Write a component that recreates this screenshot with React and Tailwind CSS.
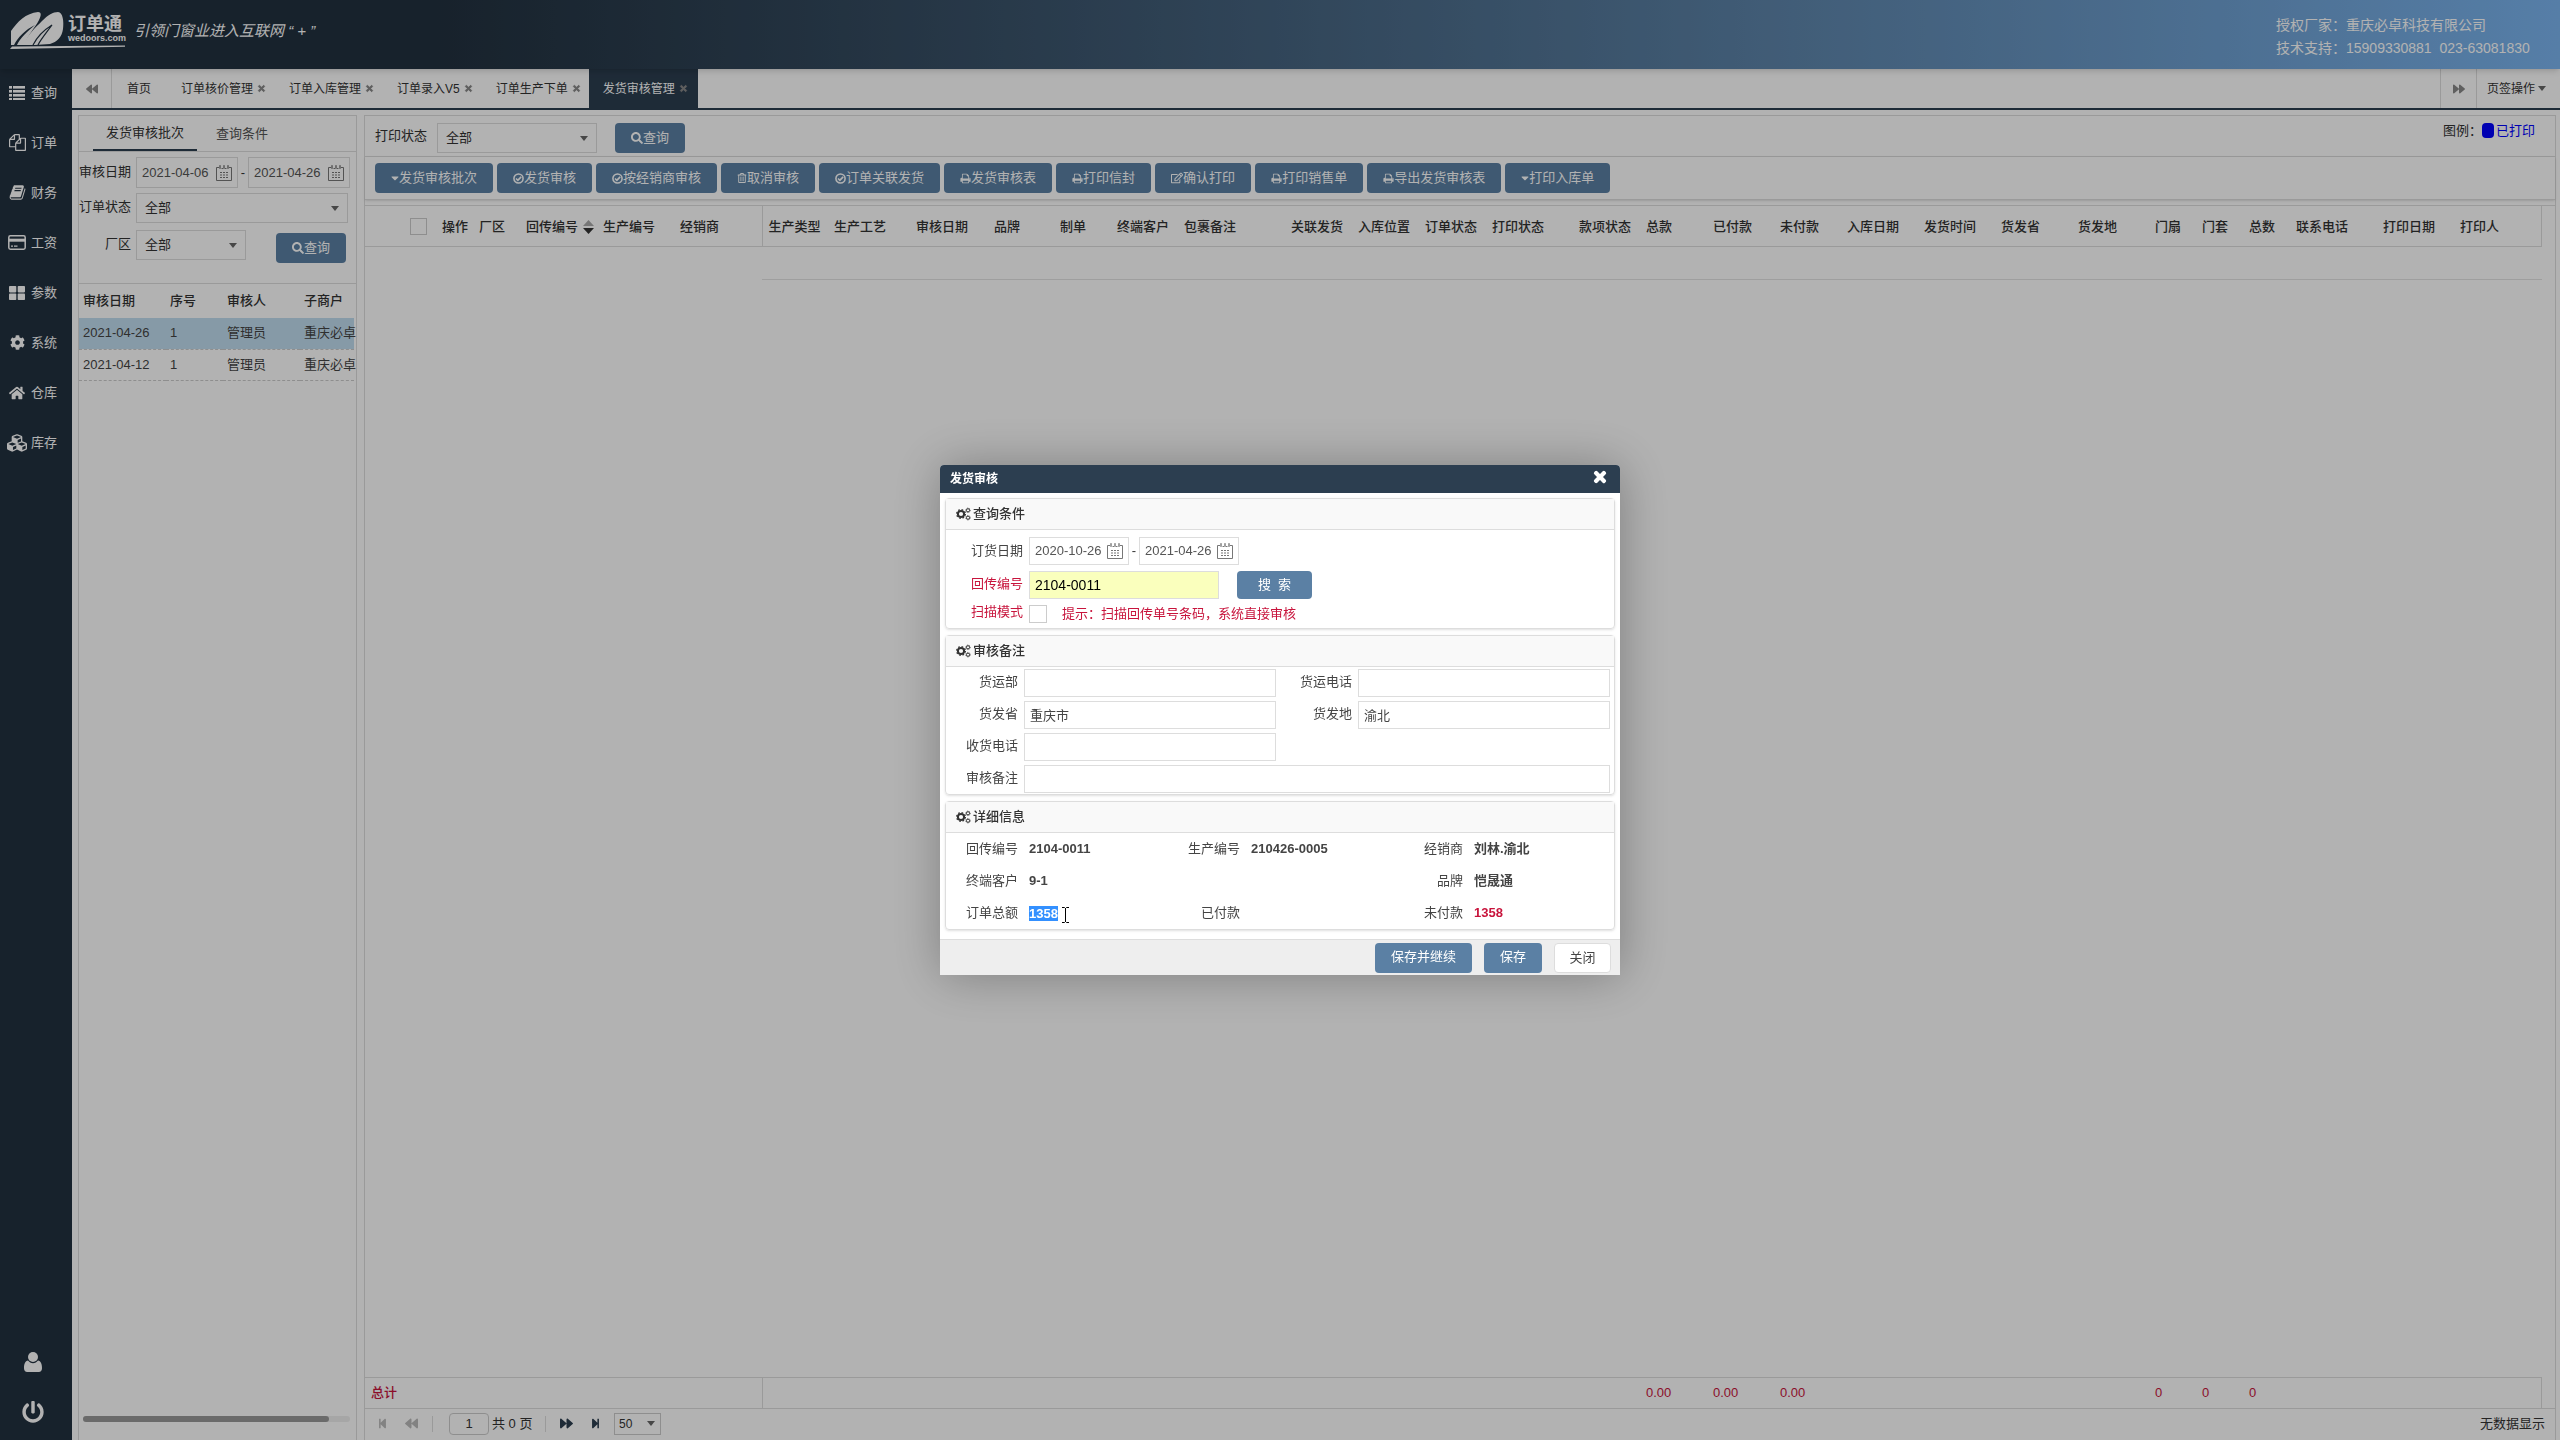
import { useState } from 'react'
import {
    FaBackward, FaForward, FaStepBackward, FaStepForward, FaTimes, FaCog, FaHome, FaCubes,
    FaPowerOff, FaSearch, FaRegTrashAlt, FaRegEdit, FaCaretDown,
} from 'react-icons/fa'

const ListIcon = () => (
    <svg viewBox="0 0 16 14" className="w-4 h-[14px]" fill="currentColor">
        {[0, 4, 8, 12].map(y => (
            <g key={y}>
                <rect x="0" y={y} width="3" height="2.6" />
                <rect x="4" y={y} width="12" height="2.6" />
            </g>
        ))}
    </svg>
)

const FilesIcon = () => (
    <svg viewBox="0 0 1792 1792" className="w-[17px] h-[17px]" fill="currentColor">
        <path d="M1696 384q40 0 68 28t28 68v1216q0 40-28 68t-68 28h-960q-40 0-68-28t-28-68v-288h-544q-40 0-68-28t-28-68v-672q0-40 20-88t48-76l408-408q28-28 76-48t88-20h416q40 0 68 28t28 68v328q68-40 128-40h416zm-544 213l-299 299h299v-299zm-640-384l-299 299h299v-299zm196 647l316-316v-416h-384v416q0 40-28 68t-68 28h-416v640h512v-256q0-40 20-88t48-76zm956 804v-1152h-384v416q0 40-28 68t-68 28h-416v640h896z" />
    </svg>
)

const BookIcon = () => (
    <svg viewBox="0 0 1792 1792" className="w-[17px] h-[17px]" fill="currentColor">
        <path d="M1703 478q40 57 18 129l-275 906q-19 64-76.5 107.5t-122.5 43.5h-923q-77 0-148.5-53.5t-99.5-131.5q-24-67-2-127 0-4 3-27t4-37q1-8-3-21.5t-3-19.5q2-11 8-21t16.5-23.5 16.5-23.5q23-38 45-91.5t30-91.5q3-10 .5-30t-.5-28q3-11 17-28t17-23q21-36 42-92t25-90q1-9-2.5-32t.5-28q4-13 22-30.5t22-22.5q19-26 42.5-84.5t27.5-96.5q1-8-3-25.5t-2-26.5q2-8 9-18t18-23 17-21q8-12 16.5-30.5t15-35 16-36 19.5-32 26.5-23.5 36-11.5 47.5 5.5l-1 3q38-9 51-9h761q74 0 114 56t18 130l-274 906q-36 119-71.5 153.5t-128.5 34.5h-869q-27 0-38 15-11 16-1 43 24 70 144 70h923q29 0 56-15.5t35-41.5l300-987q7-22 5-57 38 15 59 43zm-1064 2q-4 13 2 22.5t20 9.5h608q13 0 25.5-9.5t16.5-22.5l21-64q4-13-2-22.5t-20-9.5h-608q-13 0-25.5 9.5t-16.5 22.5zm-83 256q-4 13 2 22.5t20 9.5h608q13 0 25.5-9.5t16.5-22.5l21-64q4-13-2-22.5t-20-9.5h-608q-13 0-25.5 9.5t-16.5 22.5z" />
    </svg>
)

const CardIcon = () => (
    <svg viewBox="0 0 18 15" className="w-[18px] h-[15px]" fill="none" stroke="currentColor">
        <rect x="0.8" y="0.8" width="16.4" height="13.4" rx="1.6" strokeWidth="1.5" />
        <path d="M1 5.2h16" strokeWidth="3" />
        <path d="M3 11.2h2M6 11.2h3.5" strokeWidth="1.3" />
    </svg>
)

const BlocksIcon = () => (
    <svg viewBox="0 0 16 14" className="w-4 h-[14px]" fill="currentColor">
        <rect width="7.3" height="6.4" rx="0.8" />
        <rect x="8.7" width="7.3" height="6.4" rx="0.8" />
        <rect y="7.6" width="7.3" height="6.4" rx="0.8" />
        <rect x="8.7" y="7.6" width="7.3" height="6.4" rx="0.8" />
    </svg>
)

const UserIcon = () => (
    <svg viewBox="0 0 18 20" className="w-[18px] h-5" fill="currentColor">
        <ellipse cx="9" cy="5" rx="5" ry="5" />
        <path d="M4 8.6C1.2 9 0 12 0 16.2C0 18.5 1.3 20 3.2 20h11.6C16.7 20 18 18.5 18 16.2C18 12 16.8 9 14 8.6C12.8 10.3 11 11.2 9 11.2S5.2 10.3 4 8.6z" />
    </svg>
)

const PrintIcon = () => (
    <svg viewBox="0 0 1792 1792" className="w-[11px] h-[11px]" fill="currentColor">
        <path d="M448 1536h896v-256h-896v256zm0-640h896v-384h-160q-40 0-68-28t-28-68v-160h-640v640zm1152 64q0-26-19-45t-45-19-45 19-19 45 19 45 45 19 45-19 19-45zm128 0v416q0 13-9.5 22.5t-22.5 9.5h-224v160q0 40-28 68t-68 28h-960q-40 0-68-28t-28-68v-160h-224q-13 0-22.5-9.5t-9.5-22.5v-416q0-79 56.5-135.5t135.5-56.5h64v-544q0-40 28-68t68-28h672q40 0 88 20t76 48l152 152q28 28 48 76t20 88v256h64q79 0 135.5 56.5t56.5 135.5z" />
    </svg>
)

const CheckIcon = () => (
    <svg viewBox="0 0 12 12" className="w-[11px] h-[11px]" fill="none" stroke="currentColor">
        <circle cx="6" cy="6" r="5" strokeWidth="1.7" />
        <path d="M3.3 6l2 2l3.6-3.8" strokeWidth="1.8" />
    </svg>
)

const CogsIcon = () => (
    <svg viewBox="0 0 15 14" className="w-[15px] h-[14px]" fill="none" stroke="currentColor">
        <circle cx="5" cy="7" r="3.1" strokeWidth="2" />
        <circle cx="5" cy="7" r="4.4" strokeWidth="1.2" strokeDasharray="1.7 1.756" />
        <circle cx="12" cy="3.3" r="1.6" strokeWidth="1" />
        <circle cx="12" cy="3.3" r="2.3" strokeWidth="0.7" strokeDasharray="0.9 0.906" />
        <circle cx="12" cy="10.7" r="1.6" strokeWidth="1" />
        <circle cx="12" cy="10.7" r="2.3" strokeWidth="0.7" strokeDasharray="0.9 0.906" />
    </svg>
)

const CalendarIcon = () => (
    <svg viewBox="0 0 16 16" className="w-4 h-4 flex-shrink-0 text-[#777]" fill="none" stroke="currentColor">
        <path d="M3 2.5H0.5v13h15v-13H13M5.5 3.5h1.5M9 3.5h1.5" />
        <path d="M3.5 0.5h1v3h-1zM7.5 0.5h1v3h-1zM11.5 0.5h1v3h-1z" strokeWidth="0.7" />
        <path d="M4 7.5h2M7 7.5h2M10 7.5h2M4 10h2M7 10h2M10 10h2M4 12.5h2M7 12.5h2M10 12.5h2" strokeWidth="1.2" />
    </svg>
)

const Triangle = () => (
    <svg viewBox="0 0 8 5" className="w-2 h-[5px] flex-shrink-0 text-[#666] pointer-events-none" fill="currentColor">
        <path d="M0 0h8L4 5z" />
    </svg>
)

const NAV = [
    { icon: <ListIcon />, label: '查询' },
    { icon: <FilesIcon />, label: '订单' },
    { icon: <BookIcon />, label: '财务' },
    { icon: <CardIcon />, label: '工资' },
    { icon: <BlocksIcon />, label: '参数' },
    { icon: <FaCog size={15} />, label: '系统' },
    { icon: <FaHome size={16} />, label: '仓库' },
    { icon: <FaCubes size={20} />, label: '库存' },
]

const TABS = ['订单核价管理', '订单入库管理', '订单录入V5', '订单生产下单', '发货审核管理']

const caret = <FaCaretDown size={12} className="-mx-0.5" />

const TOOLS = [
    { icon: caret, label: '发货审核批次' },
    { icon: <CheckIcon />, label: '发货审核' },
    { icon: <CheckIcon />, label: '按经销商审核' },
    { icon: <FaRegTrashAlt size={10} />, label: '取消审核' },
    { icon: <CheckIcon />, label: '订单关联发货' },
    { icon: <PrintIcon />, label: '发货审核表' },
    { icon: <PrintIcon />, label: '打印信封' },
    { icon: <FaRegEdit size={12} />, label: '确认打印' },
    { icon: <PrintIcon />, label: '打印销售单' },
    { icon: <PrintIcon />, label: '导出发货审核表' },
    { icon: caret, label: '打印入库单' },
]

// the first FROZEN columns sit left of the divider
const FROZEN = 6
const COLUMNS = [
    { key: 'check', width: 71 },
    { key: 'op', label: '操作', width: 37 },
    { key: 'area', label: '厂区', width: 47 },
    { key: 'backNo', label: '回传编号', width: 77, sort: true },
    { key: 'prodNo', label: '生产编号', width: 77 },
    { key: 'dealer', label: '经销商', width: 88 },
    { key: 'type', label: '生产类型', width: 66 },
    { key: 'craft', label: '生产工艺', width: 82 },
    { key: 'date', label: '审核日期', width: 78 },
    { key: 'brand', label: '品牌', width: 66 },
    { key: 'maker', label: '制单', width: 57 },
    { key: 'client', label: '终端客户', width: 67 },
    { key: 'pack', label: '包裹备注', width: 107 },
    { key: 'link', label: '关联发货', width: 67 },
    { key: 'place', label: '入库位置', width: 67 },
    { key: 'status', label: '订单状态', width: 67 },
    { key: 'print', label: '打印状态', width: 87 },
    { key: 'pay', label: '款项状态', width: 67 },
    { key: 'total', label: '总款', width: 67, sum: '0.00' },
    { key: 'paid', label: '已付款', width: 67, sum: '0.00' },
    { key: 'unpaid', label: '未付款', width: 67, sum: '0.00' },
    { key: 'inDate', label: '入库日期', width: 77 },
    { key: 'outDate', label: '发货时间', width: 77 },
    { key: 'province', label: '货发省', width: 77 },
    { key: 'city', label: '货发地', width: 77 },
    { key: 'leaf', label: '门扇', width: 47, sum: '0' },
    { key: 'frame', label: '门套', width: 47, sum: '0' },
    { key: 'count', label: '总数', width: 47, sum: '0' },
    { key: 'phone', label: '联系电话', width: 87 },
    { key: 'printDate', label: '打印日期', width: 77 },
    { key: 'printer', label: '打印人' },
]

const BATCHES = [
    { date: '2021-04-26', no: 1, user: '管理员', shop: '重庆必卓' },
    { date: '2021-04-12', no: 1, user: '管理员', shop: '重庆必卓' },
]

function Cols() {
    return (
        <colgroup>
            {COLUMNS.map(c => <col key={c.key} style={c.width ? { width: c.width } : undefined} />)}
        </colgroup>
    )
}

function Button({ icon, children, className = 'h-[30px] px-4' }) {
    return (
        <button className={`flex items-center justify-center rounded bg-[#5b80a4] text-white whitespace-nowrap cursor-pointer ${className}`}>
            {icon}{children}
        </button>
    )
}

function Select({ id, className }) {
    return (
        <div className={`flex items-center h-[30px] border border-[#ddd] pr-2 ${className}`}>
            <select id={id} className="flex-1 min-w-0 h-full pl-2 appearance-none outline-none bg-transparent">
                <option>全部</option>
            </select>
            <Triangle />
        </div>
    )
}

function DateInput({ id, value, label, className }) {
    return (
        <div className={`flex items-center border border-[#ddd] pl-[5px] pr-[5px] ${className}`}>
            <input id={id} aria-label={label} defaultValue={value} className="flex-1 min-w-0 outline-none bg-transparent text-[#555]" />
            <CalendarIcon />
        </div>
    )
}

function Header() {
    return (
        <header className="h-[69px] flex items-start justify-between bg-gradient-to-r from-[#22313f] from-17% via-[#5e86ac] via-70% to-[#7bb5f0] text-white shadow-md relative">
            <div className="flex pl-[10px] pt-[11px]">
                <div>
                    <div className="flex gap-1">
                        <svg viewBox="0 0 54 34" className="w-[54px] h-[34px]" fill="currentColor">
                            <path d="M1 34V20C7 11 16 2 28 1C32 1 31 5 29 9C25 17 18 23 15 34H7C10 27 17 21 25 14C15 19 8 26 4 34z" />
                            <path d="M14 34C17 24 25 17 32 10C38 4 43 1 48 1C53 1 54 11 53 18C52 26 47 31 40 33L25 34z" />
                            <path d="M23 34C27 26 34 19 42 14C37 21 31 28 28 34" fill="none" stroke="#22313f" strokeWidth="1.2" />
                        </svg>
                        <div className="pt-1">
                            <p className="text-lg leading-[18px] font-bold">订单通</p>
                            <p className="text-[9px] leading-[10px] font-bold">wedoors.com</p>
                        </div>
                    </div>
                    <svg viewBox="0 0 115 4" className="w-[115px] h-1" fill="currentColor">
                        <path d="M0 4L2 1.5L115 0.5V1.8z" />
                    </svg>
                </div>
                <p className="pl-2 pt-2 text-[15px] leading-6 italic">引领门窗业进入互联网 “ + ”</p>
            </div>
            <div className="w-[284px] pt-[14px] text-sm leading-[23px] whitespace-nowrap">
                <p>授权厂家：重庆必卓科技有限公司</p>
                <p>技术支持：15909330881&nbsp; 023-63081830</p>
            </div>
        </header>
    )
}

function Sidebar() {
    return (
        <nav className="w-[72px] flex-shrink-0 flex flex-col justify-between bg-[#22313f] text-white">
            <ul>
                {NAV.map(n => (
                    <li key={n.label}>
                        <a href="#" className="flex items-center h-[50px] pb-[3px] pl-[7px] gap-1">
                            <span className="w-5 flex justify-center">{n.icon}</span>{n.label}
                        </a>
                    </li>
                ))}
            </ul>
            <div className="flex flex-col items-center pr-[6px] pb-[17px] gap-[29px]">
                <button aria-label="用户" className="cursor-pointer"><UserIcon /></button>
                <button aria-label="退出" className="cursor-pointer"><FaPowerOff size={22} /></button>
            </div>
        </nav>
    )
}

function TabBar() {
    return (
        <div className="h-[41px] flex items-stretch border-b-2 border-[#2c3e50] text-xs text-[#333]">
            <button aria-label="左移" className="w-10 flex items-center justify-center border-r border-[#ddd] text-[#888]"><FaBackward size={12} /></button>
            <button className="px-[15px]">首页</button>
            {TABS.map((t, i) => (
                <button
                    key={t}
                    className={`flex items-center gap-1 whitespace-nowrap cursor-pointer ${i === TABS.length - 1 ? 'bg-[#2c3e50] text-white pl-[14px] pr-[10px]' : 'pl-[15px] pr-2'}`}
                >
                    {t}<FaTimes size={9} strokeWidth={50} stroke="currentColor" className="text-[#888]" />
                </button>
            ))}
            <div className="flex-1" />
            <button aria-label="右移" className="w-9 flex items-center justify-center border-l border-[#ddd] text-[#888]"><FaForward size={12} /></button>
            <button className="w-[84px] flex items-center justify-center gap-[3px] border-l border-[#ddd] pr-1">页签操作<Triangle /></button>
        </div>
    )
}

function BatchPanel() {
    return (
        <aside className="w-[279px] flex-shrink-0 flex flex-col border border-b-0 border-[#ddd]">
            <div className="h-9 flex items-stretch pl-[14px] border-b border-[#ddd]">
                <button className="w-[104px] border-b-2 border-[#2c3e50]">发货审核批次</button>
                <button className="px-[19px] text-[#555]">查询条件</button>
            </div>
            <form className="h-[132px] pt-[5px] border-b border-[#ddd]">
                <div className="flex items-center">
                    <label htmlFor="from" className="w-[57px] pr-[5px] pb-0.5 text-right">审核日期</label>
                    <DateInput id="from" value="2021-04-06" className="w-[102px] h-[31px]" />
                    <span className="w-[10px] text-center">-</span>
                    <DateInput label="结束日期" value="2021-04-26" className="w-[102px] h-[31px]" />
                </div>
                <div className="flex items-center mt-[5px]">
                    <label htmlFor="state" className="w-[57px] pr-[5px] pb-0.5 text-right">订单状态</label>
                    <Select id="state" className="w-[212px]" />
                </div>
                <div className="flex items-start mt-[7px]">
                    <label htmlFor="area" className="w-[57px] pr-[5px] pt-1 text-right">厂区</label>
                    <Select id="area" className="w-[110px] mr-[30px]" />
                    <Button icon={<FaSearch size={12} />} className="w-[70px] h-[30px] mt-[3px]">查询</Button>
                </div>
            </form>
            <div className="flex-1 overflow-hidden pr-0.5">
                <table className="w-full table-fixed text-left whitespace-nowrap">
                    <colgroup>
                        <col className="w-[87px]" /><col className="w-[57px]" /><col className="w-[77px]" /><col />
                    </colgroup>
                    <thead>
                        <tr className="h-[34px]">
                            {['审核日期', '序号', '审核人', '子商户'].map(h => <th key={h} className="pl-1 font-medium">{h}</th>)}
                        </tr>
                    </thead>
                    <tbody>
                        {BATCHES.map((b, i) => (
                            <tr key={b.date} className={`h-[31px] border-b border-dashed border-[#ccc] text-[#444] ${i === 0 ? 'bg-[#c1ddf0]' : ''}`}>
                                <td className="pl-1">{b.date}</td>
                                <td className="pl-1">{b.no}</td>
                                <td className="pl-1">{b.user}</td>
                                <td className="pl-1">{b.shop}</td>
                            </tr>
                        ))}
                    </tbody>
                </table>
            </div>
            <div className="h-[6px] ml-1 mr-[6px] mb-[18px] rounded-full bg-[#eee]">
                <div className="w-[92%] h-full rounded-full bg-[#999]" />
            </div>
        </aside>
    )
}

function Pager() {
    return (
        <div className="h-8 flex items-center border-t border-[#ddd] pl-3 pr-[10px] pb-0.5">
            <button aria-label="首页" className="text-[#bbb] pr-[17px]"><FaStepBackward size={11} /></button>
            <button aria-label="上一页" className="text-[#bbb] pr-[14px]"><FaBackward size={13} /></button>
            <span className="w-px h-4 bg-[#ddd] mr-4" />
            <input aria-label="页码" defaultValue="1" className="w-10 h-[22px] border border-[#ccc] rounded text-center outline-none" />
            <span className="px-[3px] w-[56px]">共 0 页</span>
            <span className="w-px h-4 bg-[#ddd] mr-[14px]" />
            <button aria-label="下一页" className="text-[#2c3e50] pr-[17px]"><FaForward size={13} /></button>
            <button aria-label="末页" className="text-[#2c3e50] pr-[13px]"><FaStepForward size={11} /></button>
            <div className="w-[47px] h-[22px] flex items-center border border-[#ccc] pr-[5px]">
                <select aria-label="每页条数" className="flex-1 min-w-0 pl-1 appearance-none outline-none bg-transparent text-xs">
                    <option>50</option>
                </select>
                <Triangle />
            </div>
            <p className="flex-1 text-right">无数据显示</p>
        </div>
    )
}

function MainPanel() {
    return (
        <section className="flex-1 min-w-0 flex flex-col border border-b-0 border-[#ddd]">
            <div className="h-[41px] flex items-center pl-[10px] pr-5 border-b border-[#ddd]">
                <label htmlFor="print" className="pr-[10px]">打印状态</label>
                <Select id="print" className="w-[160px] mr-[18px] mt-1" />
                <Button icon={<FaSearch size={12} />} className="w-[70px] h-[30px] mt-1">查询</Button>
                <p className="flex-1 flex items-center justify-end pb-[11px]">
                    图例：<span className="w-3 h-[15px] rounded-sm bg-[#0000ff] mr-0.5" /><span className="text-[#0000ff]">已打印</span>
                </p>
            </div>
            <div className="h-[43px] flex items-center gap-1 pl-[10px] border-b border-[#ddd] shadow-sm">
                {TOOLS.map(t => <Button key={t.label} icon={t.icon}>{t.label}</Button>)}
            </div>
            <div className="mt-[5px] pr-[13px] border-t border-[#ddd]">
                <table className="w-full table-fixed text-left whitespace-nowrap">
                    <Cols />
                    <thead>
                        <tr className="h-10 border-b border-[#ddd]">
                            {COLUMNS.map((c, i) => (
                                <th key={c.key} className={`pl-[6px] pt-0.5 font-medium ${i === FROZEN - 1 || i === COLUMNS.length - 1 ? 'border-r border-[#ddd]' : ''}`}>
                                    {c.key === 'check' && (
                                        <input type="checkbox" aria-label="全选" className="block ml-[39px] appearance-none w-[17px] h-[17px] border border-[#ccc] bg-white" />
                                    )}
                                    {c.sort ? (
                                        <span className="flex items-center gap-[5px]">
                                            {c.label}
                                            <svg viewBox="0 0 11 14" className="w-[11px] h-[14px]">
                                                <path d="M0 6h11L5.5 0z" fill="#aaa" />
                                                <path d="M0 8h11L5.5 14z" fill="#333" />
                                            </svg>
                                        </span>
                                    ) : c.label}
                                </th>
                            ))}
                        </tr>
                    </thead>
                    <tbody>
                        <tr className="h-[33px]">
                            {COLUMNS.map((c, i) => <td key={c.key} className={i >= FROZEN ? 'border-b border-[#e3e3e3]' : ''} />)}
                        </tr>
                    </tbody>
                </table>
            </div>
            <div className="flex-1" />
            <div className="pr-[13px]">
                <table className="w-full table-fixed text-left text-[#c8143c] whitespace-nowrap">
                    <Cols />
                    <tbody>
                        <tr className="h-[31px] border-t border-r border-[#ddd]">
                            {COLUMNS.map((c, i) => (
                                <td key={c.key} className={`pl-[6px] ${i === FROZEN - 1 ? 'border-r border-[#ddd]' : ''}`}>
                                    {i === 0 ? <b className="font-medium">总计</b> : c.sum}
                                </td>
                            ))}
                        </tr>
                    </tbody>
                </table>
            </div>
            <Pager />
        </section>
    )
}

function Group({ title, children, className = '' }) {
    return (
        <section className={`border border-[#ddd] rounded-sm shadow-sm ${className}`}>
            <h3 className="h-[31px] flex items-center gap-0.5 pl-[10px] border-b border-[#ddd] bg-[#f9f9f9] font-medium">
                <CogsIcon />{title}
            </h3>
            {children}
        </section>
    )
}

function Field({ id, label, value, className = '' }) {
    return (
        <div className={`flex items-center ${className}`}>
            <label htmlFor={id} className="w-[78px] pr-[6px] pb-0.5 text-right text-[#444] flex-shrink-0">{label}</label>
            <input id={id} defaultValue={value} className="flex-1 min-w-0 h-7 border border-[#ddd] px-[5px] pb-0.5 outline-none text-[#444]" />
        </div>
    )
}

function Info({ label, children }) {
    return (
        <div className="flex items-center">
            <dt className="w-[83px] pr-[11px] text-right text-[#444]">{label}</dt>
            <dd className="flex items-center font-semibold text-[#444]">{children}</dd>
        </div>
    )
}

function AuditDialog({ onClose }) {
    const [scan, setScan] = useState(false)

    return (
        <div className="fixed inset-0 z-50 flex items-center justify-center bg-black/30">
            <div role="dialog" aria-label="发货审核" className="w-[680px] bg-white rounded-t shadow-[1px_1px_50px_rgba(0,0,0,0.3)]">
                <div className="h-7 flex items-center justify-between pl-[10px] pr-3 rounded-t bg-[#2c3e50] text-white">
                    <h2 className="text-xs font-bold">发货审核</h2>
                    <button aria-label="关闭窗口" onClick={onClose} className="pb-1 cursor-pointer"><FaTimes size={16} strokeWidth={40} stroke="currentColor" /></button>
                </div>

                <div className="px-[5px] pt-[5px] pb-[9px]">
                    <Group title="查询条件">
                        <div className="pl-[25px] pt-[7px] pb-1">
                            <div className="flex items-center">
                                <label htmlFor="orderFrom" className="w-[58px] text-[#444]">订货日期</label>
                                <DateInput id="orderFrom" value="2020-10-26" className="w-[100px] h-7" />
                                <span className="w-[10px] text-center">-</span>
                                <DateInput label="订货结束日期" value="2021-04-26" className="w-[100px] h-7" />
                            </div>
                            <div className="flex items-center mt-[6px]">
                                <label htmlFor="backNo" className="w-[58px] pb-0.5 text-[#c8143c]">回传编号</label>
                                <input id="backNo" defaultValue="2104-0011" className="w-[190px] h-7 border border-[#ddd] bg-[#faffbd] px-[5px] text-sm text-black outline-none" />
                                <Button className="w-[75px] h-7 ml-[18px]">搜&nbsp; 索</Button>
                            </div>
                            <div className="flex items-center mt-[5px] text-[#c8143c]">
                                <label htmlFor="scan" className="w-[58px] pb-1 leading-4">扫描模式</label>
                                <input
                                    id="scan"
                                    type="checkbox"
                                    checked={scan}
                                    onChange={e => setScan(e.target.checked)}
                                    className="appearance-none w-[18px] h-[18px] border border-[#ccc] checked:bg-[#5b80a4]"
                                />
                                <span className="ml-[15px]">提示：扫描回传单号条码，系统直接审核</span>
                            </div>
                        </div>
                    </Group>

                    <Group title="审核备注" className="mt-[6px]">
                        <div className="grid grid-cols-[330px_1fr] gap-1 pt-0.5 pr-1 pb-px">
                            <Field id="cargo" label="货运部" />
                            <Field id="cargoTel" label="货运电话" />
                            <Field id="prov" label="货发省" value="重庆市" />
                            <Field id="place" label="货发地" value="渝北" />
                            <Field id="recvTel" label="收货电话" />
                            <Field id="remark" label="审核备注" className="col-span-2" />
                        </div>
                    </Group>

                    <Group title="详细信息" className="mt-[6px]">
                        <dl className="grid grid-cols-[222px_223px_1fr] auto-rows-[32px]">
                            <Info label="回传编号">2104-0011</Info>
                            <Info label="生产编号">210426-0005</Info>
                            <Info label="经销商">刘林.渝北</Info>
                            <Info label="终端客户">9-1</Info>
                            <div />
                            <Info label="品牌">恺晟通</Info>
                            <Info label="订单总额">
                                <mark className="bg-[#3390ff] text-white leading-[15px]">1358</mark>
                                {/* text cursor */}
                                <svg viewBox="0 0 7 16" className="w-[7px] h-4 ml-1 mt-1" fill="none" stroke="#000">
                                    <path d="M0 0.5h2.5l1 1l1-1H7M3.5 1v14M0 15.5h2.5l1-1l1 1H7" />
                                </svg>
                            </Info>
                            <Info label="已付款" />
                            <Info label="未付款"><span className="text-[#c8143c]">1358</span></Info>
                        </dl>
                    </Group>
                </div>

                <div className="h-9 flex items-center justify-end pr-[9px] gap-3 border-t border-[#ddd] bg-[#eee]">
                    <Button className="w-[97px] h-[30px] pb-px">保存并继续</Button>
                    <Button className="w-[58px] h-[30px] pb-px">保存</Button>
                    <button onClick={onClose} className="w-[57px] h-[30px] rounded-sm border border-[#ddd] bg-white text-[#444] cursor-pointer">关闭</button>
                </div>
            </div>
        </div>
    )
}

export default function App() {
    const [open, setOpen] = useState(true)

    return (
        <div className="min-h-screen flex flex-col bg-white text-[13px] leading-5 text-[#333] font-[family-name:'Liberation_Sans','Noto_Sans_CJK_SC',sans-serif]">
            <Header />
            <div className="flex-1 flex">
                <Sidebar />
                <main className="flex-1 min-w-0 flex flex-col">
                    <TabBar />
                    <div className="flex-1 flex gap-[7px] pt-[5px] pl-[6px] pr-1">
                        <BatchPanel />
                        <MainPanel />
                    </div>
                </main>
            </div>
            {open && <AuditDialog onClose={() => setOpen(false)} />}
        </div>
    )
}
